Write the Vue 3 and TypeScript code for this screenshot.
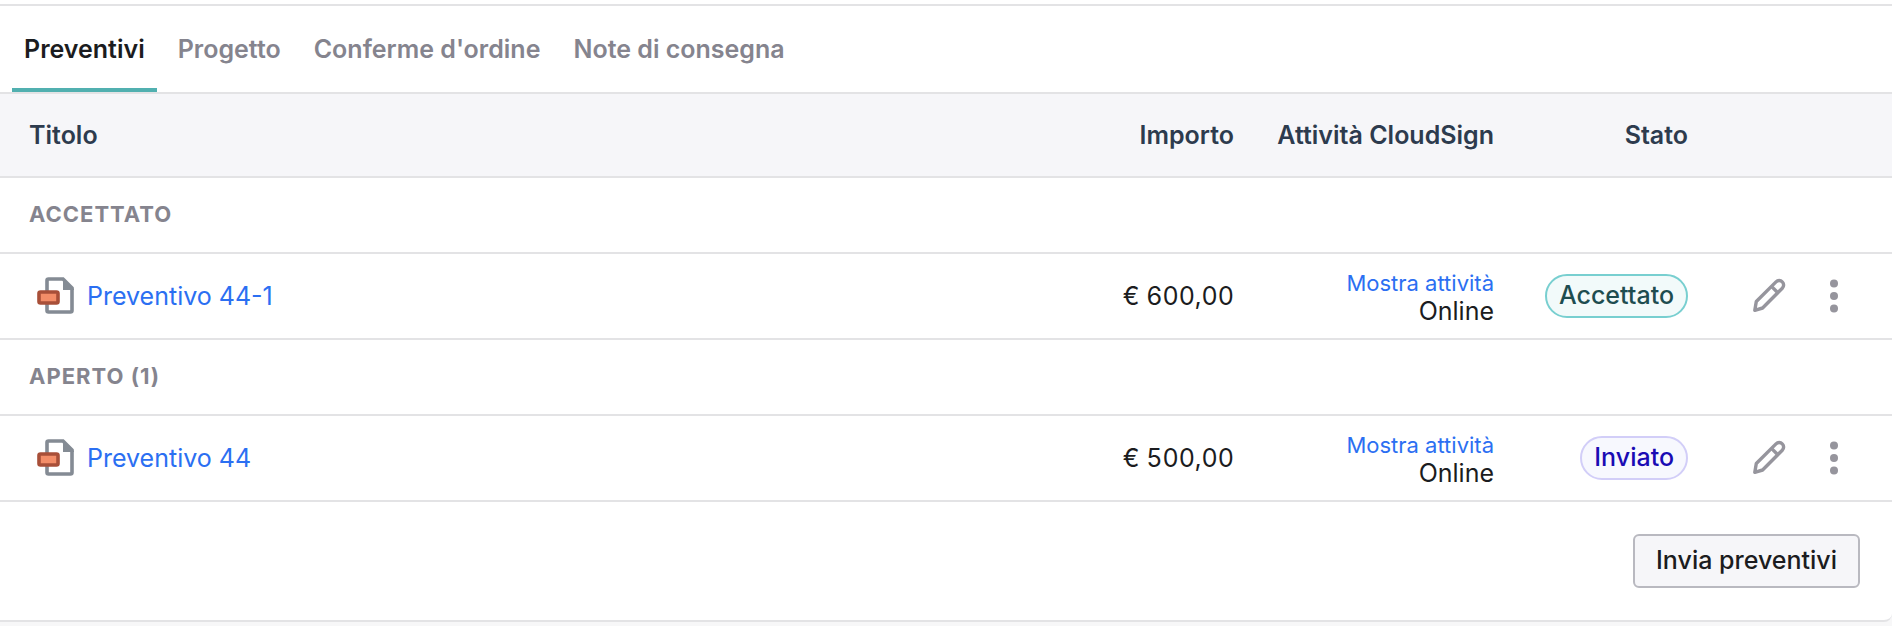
<script setup lang="ts">
import { ref } from 'vue'

interface Quote {
  title: string
  amount: string
  activity: string
  status: string
  tone: 'accepted' | 'sent'
}

interface Group {
  label: string
  quotes: Quote[]
}

const tabs: string[] = ['Preventivi', 'Progetto', "Conferme d'ordine", 'Note di consegna']
const activeTab = ref<string>('Preventivi')

const groups: Group[] = [
  {
    label: 'ACCETTATO',
    quotes: [
      { title: 'Preventivo 44-1', amount: '€ 600,00', activity: 'Online', status: 'Accettato', tone: 'accepted' },
    ],
  },
  {
    label: 'APERTO (1)',
    quotes: [
      { title: 'Preventivo 44', amount: '€ 500,00', activity: 'Online', status: 'Inviato', tone: 'sent' },
    ],
  },
]
</script>

<template>
  <div class="page">
    <main class="card">
      <nav class="tabs">
        <a
          v-for="tab in tabs"
          :key="tab"
          href="#"
          class="tab"
          :class="{ active: tab === activeTab }"
          :aria-current="tab === activeTab ? 'page' : undefined"
          @click.prevent="activeTab = tab"
        >{{ tab }}</a>
      </nav>

      <table class="quotes">
        <colgroup>
          <col>
          <col class="col-amount">
          <col class="col-activity">
          <col class="col-status">
          <col class="col-actions">
        </colgroup>
        <thead>
          <tr>
            <th scope="col" class="title">Titolo</th>
            <th scope="col">Importo</th>
            <th scope="col">Attività CloudSign</th>
            <th scope="col">Stato</th>
            <td></td>
          </tr>
        </thead>
        <tbody v-for="group in groups" :key="group.label">
          <tr class="group">
            <th scope="rowgroup" colspan="5">{{ group.label }}</th>
          </tr>
          <tr v-for="quote in group.quotes" :key="quote.title" class="quote">
            <td class="title">
              <a href="#" class="quote-link">
                <svg class="doc" viewBox="0 0 38 38" aria-hidden="true">
                  <path d="M11.500 2h14.500L35 11v22.500a1.500 1.500 0 0 1-1.500 1.500h-22a1.500 1.500 0 0 1-1.500-1.500v-30A1.500 1.500 0 0 1 11.500 2z" fill="#fff" stroke="#848b94" stroke-width="3.600" />
                  <path d="M26 1l11 11v1H26z" fill="#848b94" />
                  <rect x="2" y="15" width="19" height="11" rx="1.500" fill="#f38d68" stroke="#a84f38" stroke-width="3.600" />
                </svg>
                <span>{{ quote.title }}</span>
              </a>
            </td>
            <td class="amount">{{ quote.amount }}</td>
            <td class="activity">
              <a href="#">Mostra attività</a>
              <div>{{ quote.activity }}</div>
            </td>
            <td><span class="badge" :class="quote.tone">{{ quote.status }}</span></td>
            <td>
              <div class="actions">
                <button type="button" class="icon-button" aria-label="Modifica">
                  <svg viewBox="0 0 44 44" aria-hidden="true">
                    <g fill="none" stroke="#96959d" stroke-width="3.400" stroke-linejoin="round">
                      <path d="M7.800 36.300l1.500-8.800L29 7.900a4.400 4.400 0 0 1 6.300 0a4.400 4.400 0 0 1 0 6.300L15.600 34z" />
                      <path d="M24.500 12.400l6.300 6.300" />
                    </g>
                  </svg>
                </button>
                <button type="button" class="icon-button" aria-label="Altre azioni">
                  <svg viewBox="0 0 44 44" aria-hidden="true">
                    <g fill="#96959d">
                      <circle cx="22" cy="9.500" r="4" />
                      <circle cx="22" cy="22" r="4" />
                      <circle cx="22" cy="34.500" r="4" />
                    </g>
                  </svg>
                </button>
              </div>
            </td>
          </tr>
        </tbody>
      </table>

      <footer class="footer">
        <button type="button" class="send">Invia preventivi</button>
      </footer>
    </main>
  </div>
</template>

<style>
body {
  background: #f7f7f8;
}
</style>

<style scoped>
.page {
  border-top: 4px solid #fff;
}

.card {
  border-top: 2px solid #e3e3e5;
  border-bottom: 2px solid #e3e3e5;
  border-bottom-right-radius: 8px;
  background: #fff;
  color: #1b1c20;
  font: 400 25px/30px Inter, "Liberation Sans", sans-serif;
}

a {
  color: #2b6ff2;
  text-decoration: none;
}

.tabs {
  display: flex;
  gap: 9px;
  padding: 0 12px;
  border-bottom: 2px solid #e3e3e5;
}

.tab {
  padding: 28px 12px 24px;
  border-bottom: 4px solid transparent;
  color: #85848e;
  font-weight: 600;
}

.tab.active {
  border-bottom-color: #51b0b0;
  color: #1b1c20;
}

.quotes {
  width: 100%;
  table-layout: fixed;
  border-collapse: separate;
  border-spacing: 0;
}

.col-amount { width: 200px; }
.col-activity { width: 260px; }
.col-status { width: 194px; }
.col-actions { width: 204px; }

.quotes th,
.quotes td {
  box-sizing: border-box;
  padding: 0;
  border-bottom: 2px solid #e3e3e5;
  text-align: right;
  vertical-align: middle;
  white-space: nowrap;
}

.quotes thead th,
.quotes thead td {
  height: 84px;
  background: #f6f6f9;
  color: #2d3b4e;
  font-weight: 600;
}

.quotes .title {
  padding-left: 29px;
  text-align: left;
}

.quotes .group th {
  height: 76px;
  padding: 0 0 2px 29px;
  color: #85848e;
  font-size: 22px;
  font-weight: 700;
  letter-spacing: 1px;
  text-align: left;
}

.quotes .quote td {
  height: 86px;
}

.quote-link {
  display: flex;
  align-items: center;
  gap: 12px;
  padding-left: 8px;
}

.doc {
  width: 38px;
  height: 38px;
}

.amount {
  font-variant-numeric: tabular-nums;
}

.activity {
  line-height: 28px;
}

.activity a {
  font-size: 22px;
}

.badge {
  display: inline-block;
  box-sizing: border-box;
  height: 44px;
  padding: 0 12px;
  border: 2px solid;
  border-radius: 22px;
  font-weight: 500;
  line-height: 38px;
  vertical-align: middle;
}

.badge.accepted {
  border-color: #78cfd0;
  background: #f2fafa;
  color: #1e4d50;
}

.badge.sent {
  border-color: #d2cef8;
  background: #f7f8fe;
  color: #1a0bb4;
}

.actions {
  display: flex;
  justify-content: flex-end;
  gap: 21px;
  padding-right: 36px;
}

.icon-button {
  display: block;
  width: 44px;
  height: 44px;
  padding: 0;
  border: 0;
  background: none;
}

.icon-button svg {
  display: block;
}

.footer {
  display: flex;
  justify-content: flex-end;
  padding: 32px;
}

.send {
  padding: 9px 21px 11px;
  border: 2px solid #b9b9c0;
  border-radius: 6px;
  background: #f6f6f9;
  color: #1b1c20;
  font: inherit;
  font-weight: 500;
}
</style>
